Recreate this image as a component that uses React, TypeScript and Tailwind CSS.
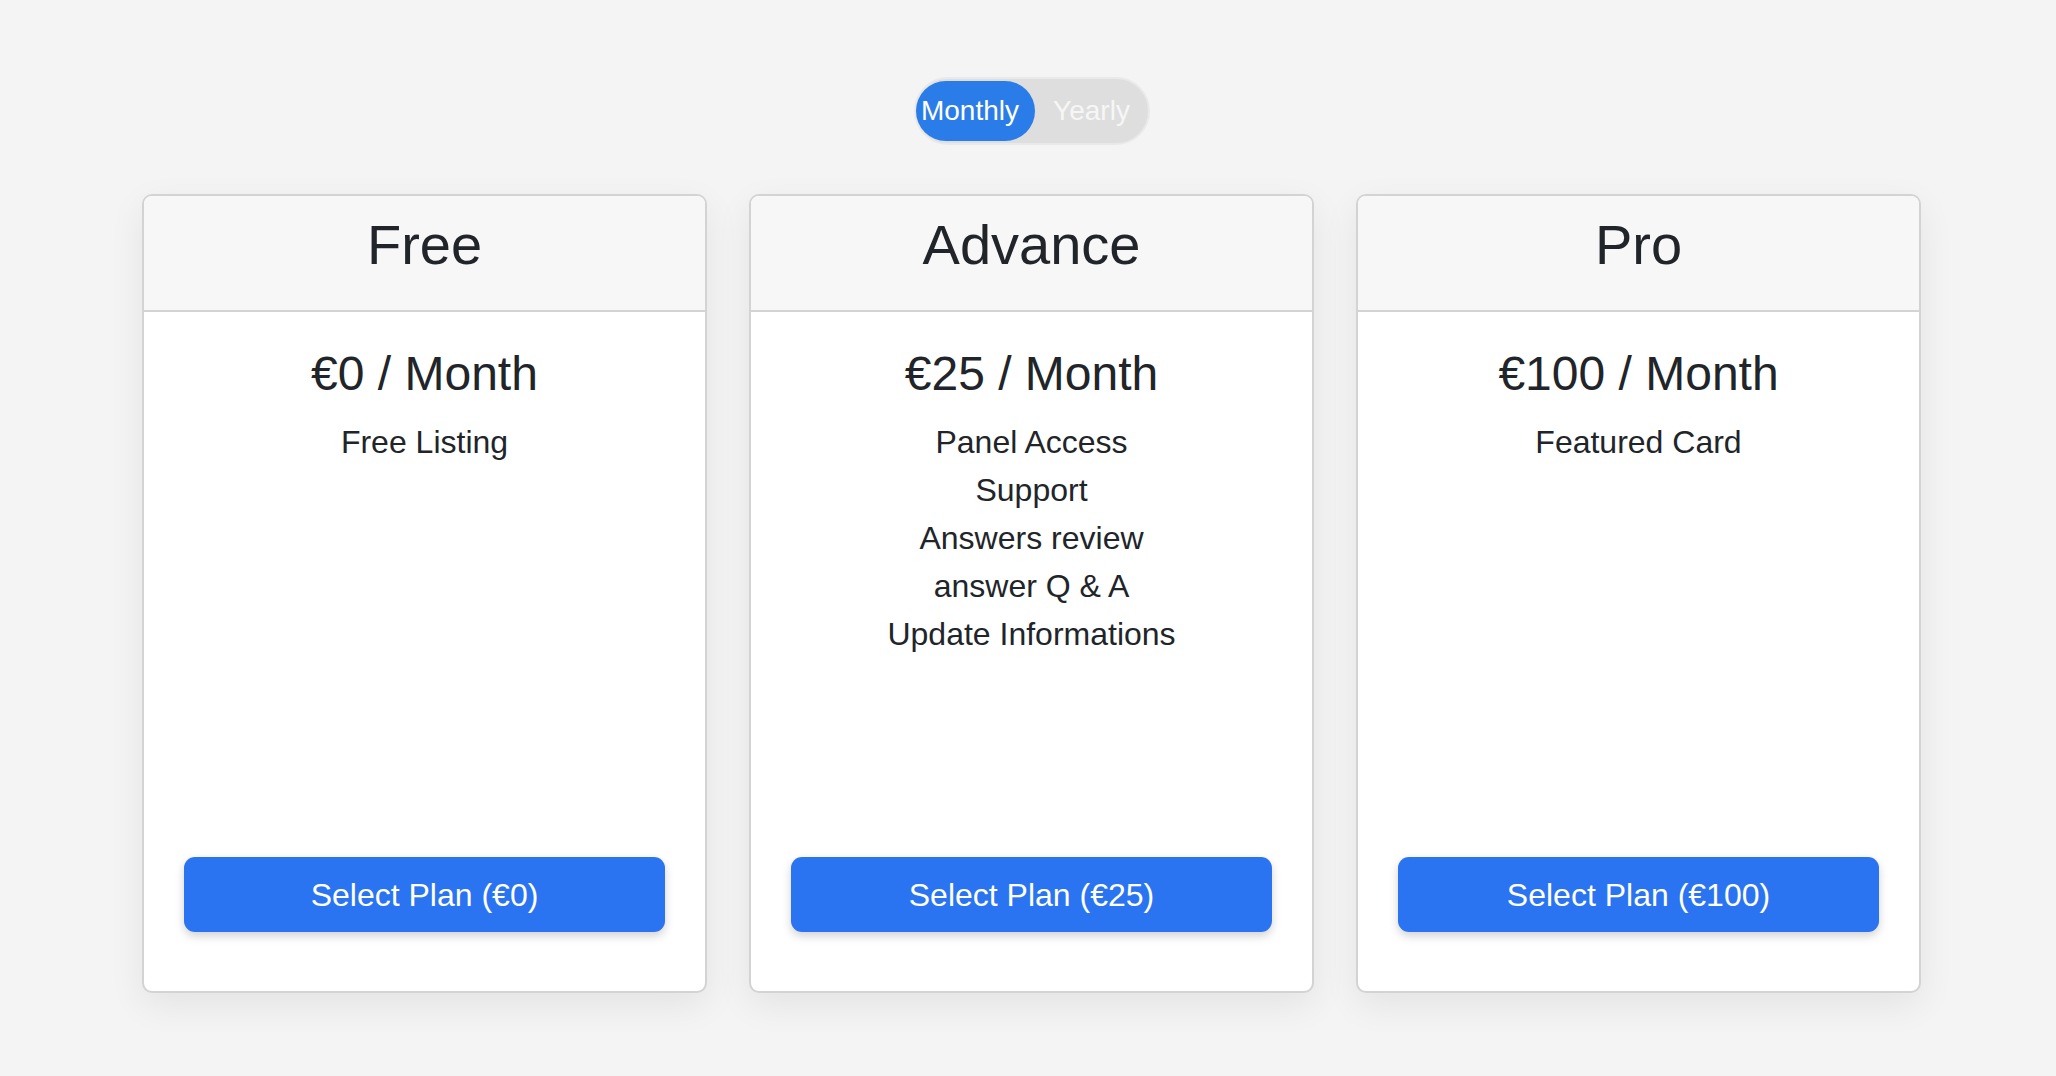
import { useState } from "react";

type Plan = {
  name: string;
  price: number;
  features: string[];
};

const plans: Plan[] = [
  { name: "Free", price: 0, features: ["Free Listing"] },
  {
    name: "Advance",
    price: 25,
    features: [
      "Panel Access",
      "Support",
      "Answers review",
      "answer Q & A",
      "Update Informations",
    ],
  },
  { name: "Pro", price: 100, features: ["Featured Card"] },
];

const PlanCard = ({ plan }: { plan: Plan }) => {
  return (
    <div className="flex h-[799px] w-[565px] flex-col overflow-hidden rounded-[10px] border-2 border-[#d3d3d3] bg-white shadow-[0_12px_36px_rgba(0,0,0,0.07)]">
      <div className="h-[116px] border-b-2 border-[#d3d3d3] bg-[#f7f7f7] pt-[15px] text-center">
        <h3 className="text-[56px] leading-[1.2] font-normal">{plan.name}</h3>
      </div>
      <div className="flex flex-1 flex-col px-[40px] pb-[59px] text-center">
        <h4 className="mt-[33px] text-[48px] leading-[1.2] font-normal">
          €{plan.price} / Month
        </h4>
        <ul className="mt-[15px] text-[32px] leading-[48px]">
          {plan.features.map((f) => (
            <li key={f}>{f}</li>
          ))}
        </ul>
        <button className="mt-auto h-[75px] w-full rounded-[11px] bg-[#2a74f2] text-[32px] text-white shadow-[0_4px_10px_rgba(0,0,0,0.18)]">
          Select Plan (€{plan.price})
        </button>
      </div>
    </div>
  );
};

export default function App() {
  const [yearly, setYearly] = useState(false);

  return (
    <div className="min-h-screen bg-[#f4f4f4] pl-[7px] font-['Liberation_Sans',Arial,sans-serif] text-[#212529]">
      <div className="flex justify-center pt-[77px]">
        <div className="flex rounded-full border-2 border-[#e9e9e9] bg-[#dedede] py-[2px] text-[28px]">
          <button
            onClick={() => setYearly(false)}
            className={
              "h-[60px] w-[119px] rounded-full pr-[10px] " +
              (!yearly ? "bg-[#2a7de9] text-white" : "text-[#f6f6f6]")
            }
          >
            Monthly
          </button>
          <button
            onClick={() => setYearly(true)}
            className={
              "h-[60px] w-[113px] rounded-full pl-[1px] " +
              (yearly ? "bg-[#2a7de9] text-white" : "text-[#f6f6f6]")
            }
          >
            Yearly
          </button>
        </div>
      </div>

      <div className="mt-[49px] flex justify-center gap-[42px] pb-[80px]">
        {plans.map((p) => (
          <PlanCard key={p.name} plan={p} />
        ))}
      </div>
    </div>
  );
}
